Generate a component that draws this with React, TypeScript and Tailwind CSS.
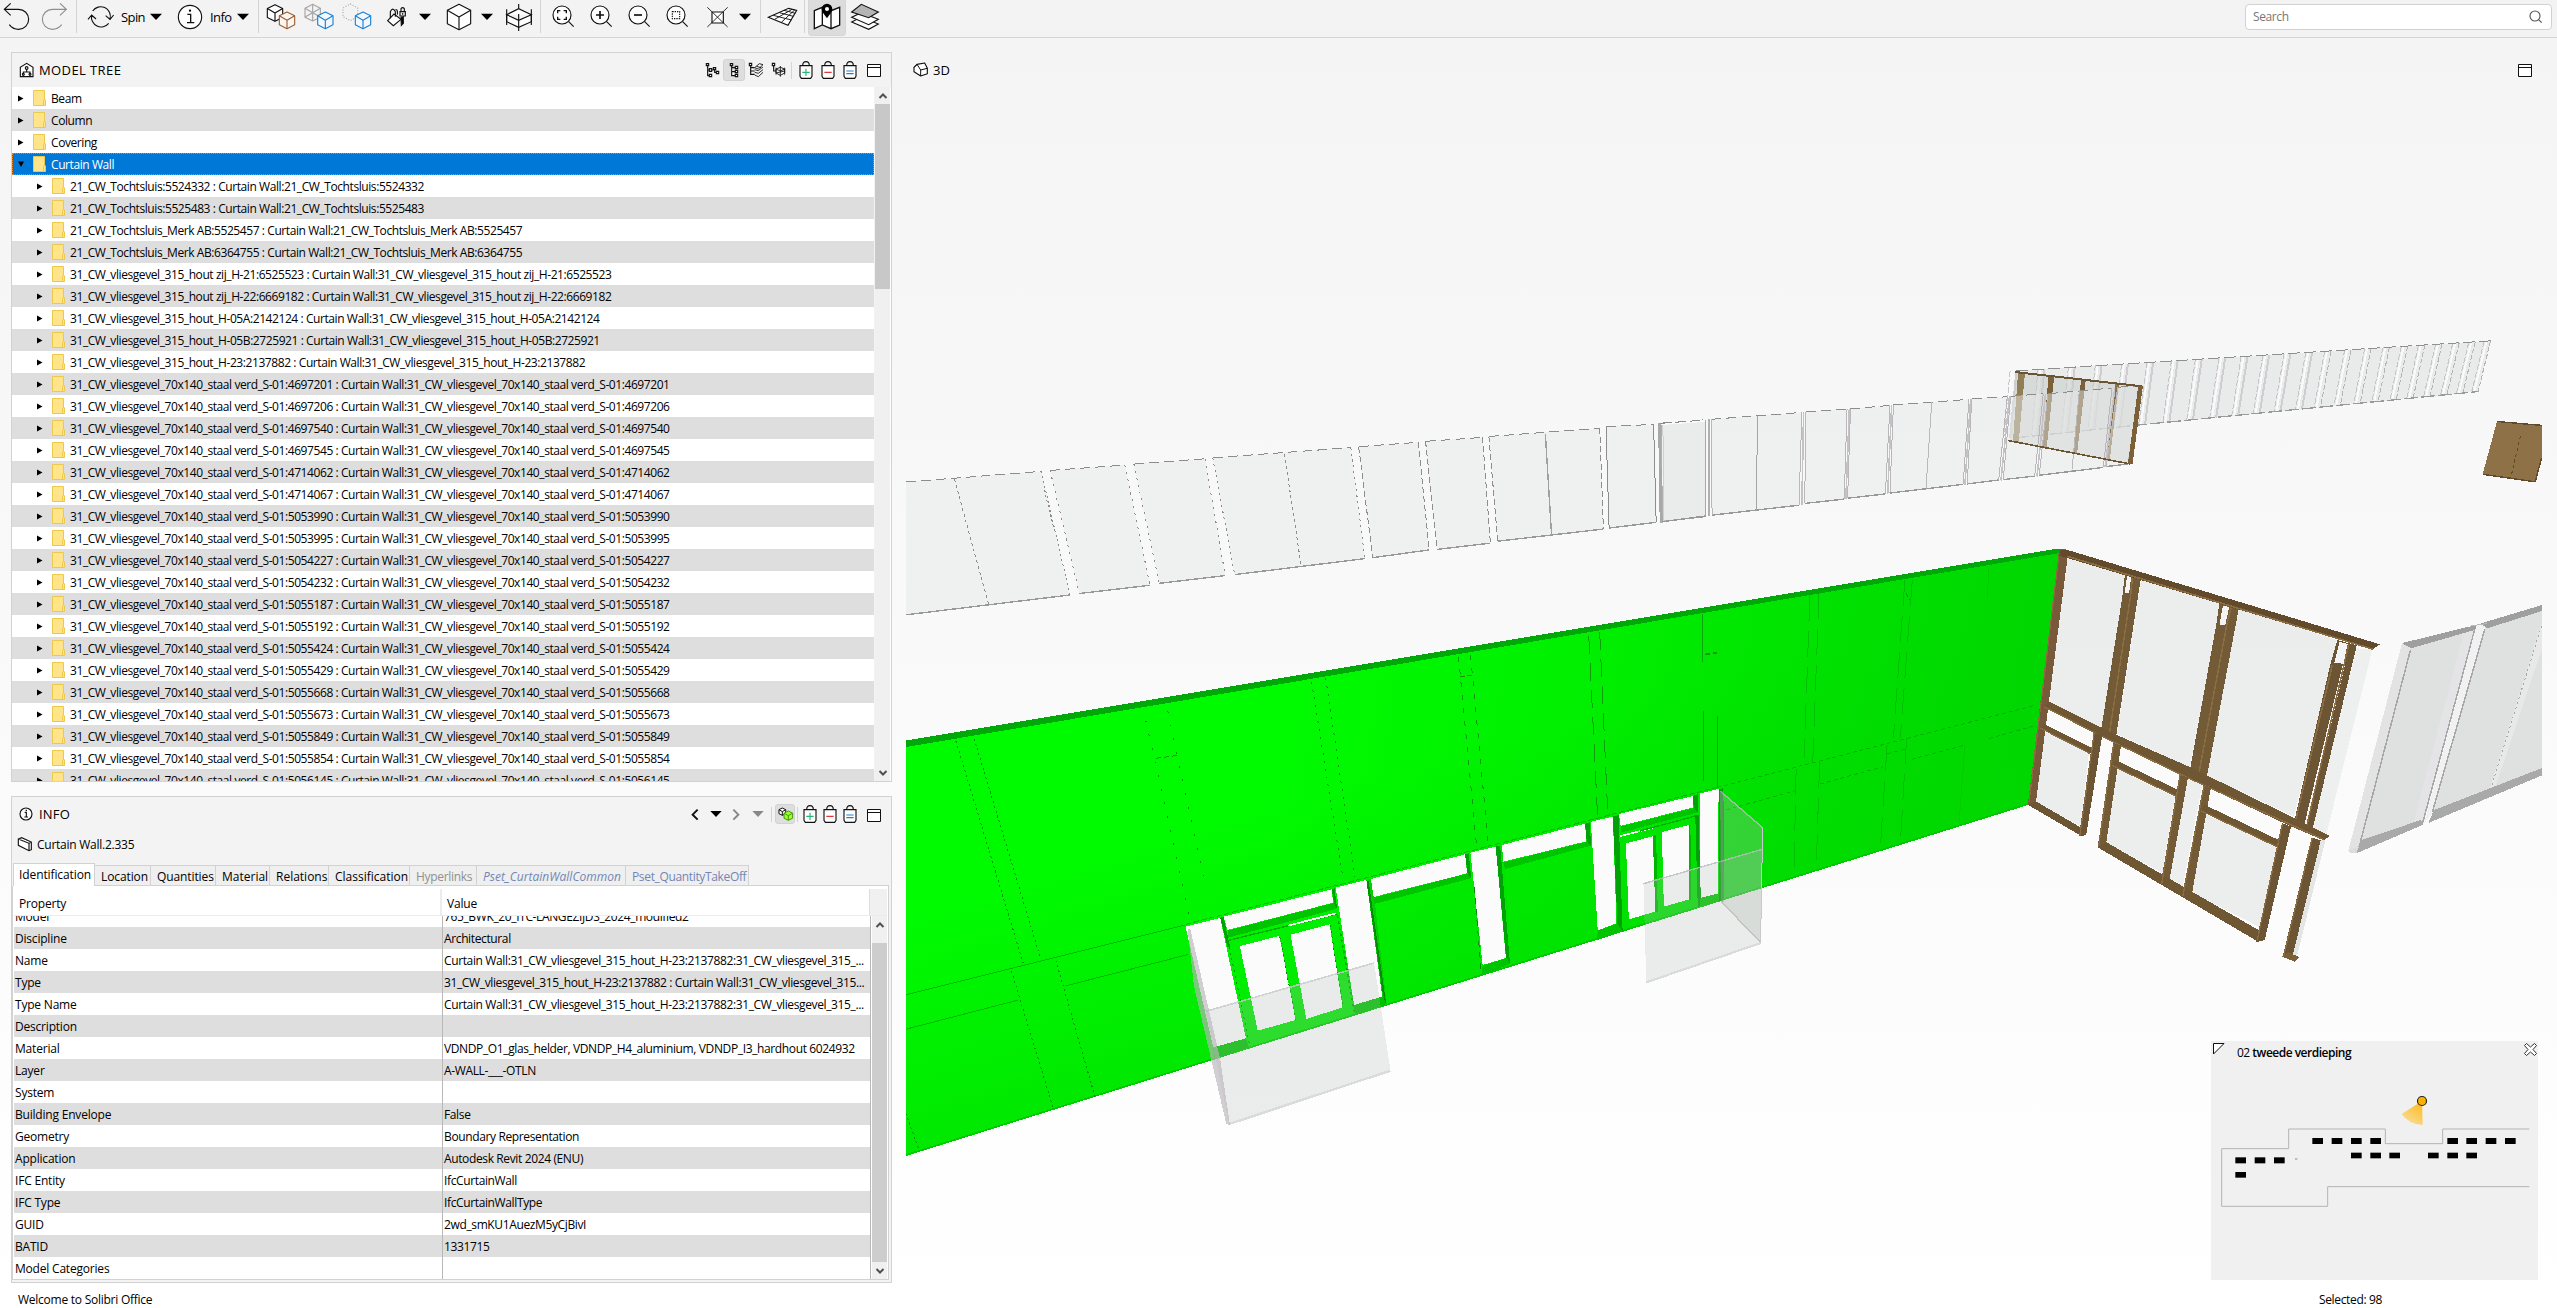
import React from "react";

/* ---------- shared pieces ---------- */

type Box = { x: number; y?: number; w: number; h?: number; children: React.ReactNode; className?: string };

// Icon cell: the artwork is authored on a grid three times finer than the screen.
function Ico({ x, y = 0, w, h = 111, children, className = "" }: Box) {
  return (
    <svg
      className={`shrink-0 ${className}`}
      width={w / 3}
      height={h / 3}
      viewBox={`${x} ${y} ${w} ${h}`}
      fill="none"
      stroke="#111"
      strokeWidth={3.4}
    >
      {children}
    </svg>
  );
}

const P = ({ p, f, o }: { p: string; f: string; o?: number }) => <polygon points={p} fill={f} opacity={o} />;

function Lines({ d, s, w = 1, dash, o }: { d: string; s: string; w?: number; dash?: string; o?: number }) {
  return (
    <path d={d} fill="none" stroke={s} strokeWidth={w} strokeDasharray={dash} opacity={o} vectorEffect="non-scaling-stroke" />
  );
}

// Isometric cube outline centred at cx, cy
function Cube({ cx, cy, r, s, fill = "none", sw = 3.4 }: { cx: number; cy: number; r: number; s: string; fill?: string; sw?: number }) {
  const a = r * 0.92;
  const b = r * 0.54;
  return (
    <g stroke={s} strokeWidth={sw} fill={fill} strokeLinejoin="round">
      <path d={`M${cx} ${cy - r}L${cx + a} ${cy - b}V${cy + b}L${cx} ${cy + r}L${cx - a} ${cy + b}V${cy - b}Z`} />
      <path fill="none" d={`M${cx - a} ${cy - b}L${cx} ${cy}L${cx + a} ${cy - b}M${cx} ${cy}V${cy + r}`} />
    </g>
  );
}

const Sep = () => <div className="h-[33px] w-px shrink-0 self-start bg-[#d4d4d4]" />;

/* ---------- toolbar ---------- */

const Lens = ({ cx }: { cx: number }) => (
  <>
    <circle cx={cx} cy={45} r={27} fill="#fff" />
    <path d={`M${cx + 20} 65L${cx + 35} 80`} />
  </>
);

function Toolbar() {
  return (
    <header className="flex h-[38px] shrink-0 items-start border-b border-[#d4d4d4] bg-[#f3f3f3]">
      <Ico x={0} w={108}>
        <path d="M32 10L13 28L32 46M13 28H56A30 30 0 0 1 56 88Q38 88 28 74" />
      </Ico>
      <Ico x={108} w={120}>
        <path stroke="#8e8e8e" d="M180 10L199 28L180 46M199 28H157A30 30 0 0 0 157 88Q174 88 185 74" />
      </Ico>
      <Sep />
      <Ico x={231} w={132}>
        <path d="M278 33A29 29 0 0 1 330 57M317 47L330 58L341 45M326 70A29 29 0 0 1 275 46M264 58L275 45L288 57" />
      </Ico>
      <span className="mt-[6px] w-[29px] text-[13px] leading-[23px] tracking-[-0.6px]">Spin</span>
      <Ico x={450} w={180}>
        <path d="M450 41H486L468 60Z" fill="#000" stroke="none" />
        <circle cx={570} cy={51} r={35} fill="#fff" />
        <path strokeWidth={4} d="M562 43H572V67M561 68H583" />
        <circle cx={570} cy={32} r={3.4} fill="#000" stroke="none" />
      </Ico>
      <span className="mt-[6px] w-[27px] text-[13px] leading-[23px] tracking-[-0.6px]">Info</span>
      <Ico x={711} w={63}>
        <path d="M711 41H747L729 60Z" fill="#000" stroke="none" />
      </Ico>
      <Sep />
      <Ico x={777} w={120}>
        <Cube cx={825} cy={39} r={25} s="#111" fill="#fff" />
        <Cube cx={861} cy={61} r={25} s="#9b5f33" fill="#fdf5ef" />
      </Ico>
      <Ico x={897} w={114}>
        <Cube cx={938} cy={38} r={25} s="#a5a5a5" />
        <path stroke="#a5a5a5" d="M938 12V38M915 51L938 38L961 51" />
        <Cube cx={976} cy={61} r={25} s="#1a80d8" fill="#f2f8fd" />
      </Ico>
      <Ico x={1011} w={117}>
        <path stroke="#a5a5a5" strokeDasharray="3 5" d="M1051 12L1073 24V50L1051 62L1029 50V24Z" />
        <Cube cx={1089} cy={61} r={25} s="#1a80d8" fill="#f2f8fd" />
      </Ico>
      <Ico x={1128} w={192}>
        <path fill="#fff" d="M1163 62L1182 42L1203 58L1180 77Z" />
        <path d="M1171 55V35Q1178 20 1186 35V50M1186 30Q1194 26 1192 44" />
        <path fill="#000" d="M1203 52L1210 50V70L1204 76Z" />
        <path fill="#eee" d="M1200 35H1216V48H1200ZM1203 35V26Q1208 20 1213 26V35" />
        <path d="M1208 39V44" />
        <path d="M1257 41H1293L1275 60Z" fill="#000" stroke="none" />
      </Ico>
      <Ico x={0} w={171}>
        <Cube cx={57} cy={51} r={38} s="#111" fill="#fff" />
        <path d="M123 41H159L141 60Z" fill="#000" stroke="none" />
      </Ico>
      <Ico x={171} w={129}>
        <path fill="#fff" d="M200 44L236 26L274 44L236 61ZM200 44V65L236 82L274 65V44" />
        <path d="M200 28V75M274 28V75M236 12V26M236 42V93" />
      </Ico>
      <Sep />
      <Ico x={303} w={132}>
        <Lens cx={366} />
        <path strokeWidth={4} d="M353 40V32H361M371 32H379V40M379 50V58H371M361 58H353V50" />
      </Ico>
      <Ico x={435} w={117}>
        <Lens cx={480} />
        <path strokeWidth={5} d="M468 45H492M480 33V57" />
      </Ico>
      <Ico x={552} w={114}>
        <Lens cx={594} />
        <path strokeWidth={5} d="M582 45H606" />
      </Ico>
      <Ico x={666} w={114}>
        <Lens cx={708} />
        <path strokeDasharray="4 3" d="M697 35H719V56H697Z" />
      </Ico>
      <Ico x={780} w={180}>
        <path fill="#fff" d="M816 36H850V69H816Z" />
        <path d="M802 22L863 81M863 22L802 81" strokeWidth={2.6} />
        <path d="M897 41H933L915 60Z" fill="#000" stroke="none" />
      </Ico>
      <Sep />
      <Ico x={963} w={129}>
        <path fill="#fff" d="M985 52L1046 25L1070 31L1044 76Z" />
        <path strokeWidth={2.8} d="M1000 46L1054 60M1018 38L1060 49M1032 31L1066 40M1004 58L1056 28M1024 67L1064 30" />
      </Ico>
      <Sep />
      <div className="ml-[3px] flex h-[36px] w-[38px] justify-center overflow-hidden rounded-b-[4px] border border-t-0 border-[#d6d6d6] bg-[#dcdcdc]">
        <Ico x={1107} w={108}>
          <path fill="#fff" strokeWidth={4} d="M1123 32L1147 22L1173 32L1199 22V75L1173 86L1147 75L1123 86ZM1147 22V75M1173 32V86" />
          <path fill="#000" stroke="none" d="M1161 55C1150 40 1145 34 1145 27A16 16 0 0 1 1177 27C1177 34 1172 40 1161 55Z" />
          <circle cx={1161} cy={27} r={6} fill="#fff" stroke="none" />
        </Ico>
      </div>
      <Ico x={1218} w={117}>
        <path fill="#fff" d="M1235 66L1264 51L1315 72L1286 88Z" />
        <path fill="#fff" d="M1235 52L1264 38L1315 58L1286 74Z" />
        <path fill="#b4b4b4" d="M1235 36L1264 13L1315 36L1286 53Z" />
      </Ico>
      <div className="ml-auto mt-[4px] mr-[5px] flex h-[26px] w-[307px] items-center justify-between rounded-[4px] border border-[#d2d2d2] bg-white pl-[7px] pr-[8px]">
        <span className="text-[12px] tracking-[-0.4px] text-[#777]">Search</span>
        <Ico x={988} y={30} w={42} h={42}>
          <circle cx={1006} cy={48} r={15} stroke="#555" />
          <path stroke="#555" d="M1016 58L1026 68" />
        </Ico>
      </div>
    </header>
  );
}

/* ---------- panel icons ---------- */

const Bag = ({ x, kind }: { x: number; kind: "add" | "remove" | "equal" }) => (
  <Ico x={0} y={0} w={x} h={69} className="mt-px">
    <g transform={`translate(${(x - 42) / 2} 0)`}>
      <path fill="#fff" d="M3 20H39V52L35 58H7L3 52Z" />
      <path d="M11 20Q11 8 21 8Q31 8 31 20" />
      {kind === "add" && <path stroke="#22b573" d="M21 29V51M10 40H32" />}
      {kind === "remove" && <path stroke="#e02020" d="M10 40H32" />}
      {kind === "equal" && <path stroke="#1a80d8" d="M10 36H32M10 44H32" />}
    </g>
  </Ico>
);

const WindowIcon = () => (
  <svg width="14" height="13" viewBox="0 0 14 13" fill="#fff" stroke="#111" className="shrink-0">
    <path d="M0.5 0.5H13.5V12.5H0.5ZM0.5 3.5H13.5" />
  </svg>
);

const Chevron = ({ up }: { up?: boolean }) => (
  <svg width="10" height="8" viewBox="0 0 10 8" fill="none" stroke="#505050" strokeWidth="2">
    <path d={up ? "M1.5 6L5 2.5L8.5 6" : "M1.5 2L5 5.5L8.5 2"} />
  </svg>
);

/* ---------- model tree ---------- */

const doubled = (n: string) => `${n} : Curtain Wall:${n}`;
const STEEL = [
  "4697201", "4697206", "4697540", "4697545", "4714062", "4714067", "5053990", "5053995", "5054227", "5054232",
  "5055187", "5055192", "5055424", "5055429", "5055668", "5055673", "5055849", "5055854", "5056145",
];
const ROOTS = ["Beam", "Column", "Covering", "Curtain Wall"];
const CHILDREN = [
  "21_CW_Tochtsluis:5524332",
  "21_CW_Tochtsluis:5525483",
  "21_CW_Tochtsluis_Merk AB:5525457",
  "21_CW_Tochtsluis_Merk AB:6364755",
  "31_CW_vliesgevel_315_hout zij_H-21:6525523",
  "31_CW_vliesgevel_315_hout zij_H-22:6669182",
  "31_CW_vliesgevel_315_hout_H-05A:2142124",
  "31_CW_vliesgevel_315_hout_H-05B:2725921",
  "31_CW_vliesgevel_315_hout_H-23:2137882",
  ...STEEL.map((s) => `31_CW_vliesgevel_70x140_staal verd_S-01:${s}`),
].map(doubled);

const Folder = () => (
  <svg width="13" height="16" viewBox="0 0 13 16" className="ml-[9px] shrink-0">
    <path d="M0.5 0.5H11.5V9L12.5 10V15.5H0.5Z" fill="#ffe48a" stroke="#ecc94b" />
    <path d="M10.5 15.5V10.5L11.5 9" fill="none" stroke="#ecc94b" />
  </svg>
);

function TreeRow({ text, child }: { text: string; child?: boolean }) {
  const selected = text === "Curtain Wall";
  return (
    <div
      className={
        "flex h-[22px] shrink-0 items-center " +
        (child ? "pl-[25px] " : "pl-[6px] ") +
        (selected
          ? "bg-[#0078d7] text-white outline-1 -outline-offset-1 outline-dotted outline-[#e8842c]"
          : "odd:bg-white even:bg-[#dedede]")
      }
    >
      <svg width="6" height="7" viewBox="0 0 6 7" className="shrink-0">
        <path d={selected ? "M0 0.5H6L3 6Z" : "M0 0.5V6.5L5.5 3.5Z"} />
      </svg>
      <Folder />
      <span className="ml-[5px] pt-px text-[12px] leading-[22px] tracking-[-0.42px] whitespace-pre">{text}</span>
    </div>
  );
}

function ModelTree() {
  return (
    <section className="flex h-[730px] shrink-0 flex-col border border-[#d2d2d2] bg-[#f3f3f3]">
      <div className="flex h-[34px] shrink-0 items-center pr-[10px] pl-[7px]">
        <Ico x={58} y={186} w={45} h={48}>
          <path d="M62 230V202L81 190L100 202V230Z" fill="#fff" />
          <circle cx={81} cy={204} r={4} />
          <path d="M81 208V216M71 223V216H91V223" />
          <circle cx={71} cy={223} r={3} />
          <circle cx={91} cy={223} r={3} />
        </Ico>
        <h2 className="ml-[5px] pt-px text-[13px] tracking-[0.4px]">MODEL TREE</h2>
        <div className="ml-auto flex items-center">
          <Ico x={792} y={186} w={57} h={48}>
            <path d="M799 191H806V197H799ZM803 197V227H808M803 210H808M808 206H815V214H808ZM808 223H815V230H808ZM815 210H821M820 203H827V209H820ZM824 209V217H829M829 214H836V221H829Z" />
          </Ico>
          <div className="flex h-[22px] w-[22px] items-center justify-center rounded-[3px] border border-[#d2d2d2] bg-[#dedede]">
            <Ico x={858} y={186} w={48} h={48}>
              <path fill="#fff" d="M871 191H878V197H871ZM875 197V227H885M875 203H885M875 215H885M886 199H893V206H886ZM886 211H893V218H886ZM886 223H893V230H886Z" />
            </Ico>
          </div>
          <Ico x={915} y={186} w={63} h={48}>
            <path d="M928 190H935V197H928ZM932 197V223H944M932 203H944M932 213H944" />
            <path strokeWidth={2.6} d="M944 203L958 191L969 194L955 207ZM944 209L955 212L969 201M944 217L955 220L969 209M944 225L955 230L969 217M950 199L963 203" />
          </Ico>
          <Ico x={978} y={186} w={75} h={48}>
            <path d="M997 190H1004V197H997ZM1001 197V213H1008" />
            <path strokeWidth={2.6} d="M1008 207L1021 202L1034 207V219L1021 226L1008 219ZM1008 207L1021 213L1034 207M1021 198V230M1008 203V224M1034 203V224M1008 219L1034 213" />
          </Ico>
          <div className="h-[17px] w-px bg-[#d4d4d4]" />
          <div className="w-[3px]" />
          <Bag x={66} kind="add" />
          <Bag x={66} kind="remove" />
          <Bag x={66} kind="equal" />
          <div className="ml-[6px]">
            <WindowIcon />
          </div>
        </div>
      </div>
      <div className="flex min-h-0 flex-1">
        <div className="flex min-h-0 flex-1 flex-col overflow-hidden">
          {ROOTS.map((t) => (
            <TreeRow key={t} text={t} />
          ))}
          {CHILDREN.map((t) => (
            <TreeRow key={t} text={t} child />
          ))}
        </div>
        <div className="ml-px flex w-[15px] flex-col items-center bg-[#f0f0f0]">
          <div className="flex h-[17px] w-full items-center justify-center">
            <Chevron up />
          </div>
          <div className="h-[185px] w-full bg-[#c8c8c8]" />
          <div className="mt-auto flex h-[17px] items-center">
            <Chevron />
          </div>
        </div>
        <div className="w-px bg-white" />
      </div>
    </section>
  );
}

/* ---------- info panel ---------- */

const TABS: [string, string][] = [
  ["Location", "w-[56px] tracking-[-0.1px]"],
  ["Quantities", "w-[65px] tracking-[-0.1px]"],
  ["Material", "w-[54px]"],
  ["Relations", "w-[59px]"],
  ["Classification", "w-[81px]"],
  ["Hyperlinks", "w-[67px] tracking-[-0.3px] text-[#909090]"],
  ["Pset_CurtainWallCommon", "w-[149px] italic tracking-[0.02px] text-[#7286b4]"],
  ["Pset_QuantityTakeOff", "w-[123px] tracking-[-0.35px] text-[#7286b4]"],
];

const PROPS: [string, string][] = [
  ["Model", "765_BWK_20_ITC-LANGEZIJDS_2024_modified2"],
  ["Discipline", "Architectural"],
  ["Name", "Curtain Wall:31_CW_vliesgevel_315_hout_H-23:2137882:31_CW_vliesgevel_315_..."],
  ["Type", "31_CW_vliesgevel_315_hout_H-23:2137882 : Curtain Wall:31_CW_vliesgevel_315..."],
  ["Type Name", "Curtain Wall:31_CW_vliesgevel_315_hout_H-23:2137882:31_CW_vliesgevel_315_..."],
  ["Description", ""],
  ["Material", "VDNDP_O1_glas_helder, VDNDP_H4_aluminium, VDNDP_I3_hardhout 6024932"],
  ["Layer", "A-WALL-___-OTLN"],
  ["System", ""],
  ["Building Envelope", "False"],
  ["Geometry", "Boundary Representation"],
  ["Application", "Autodesk Revit 2024 (ENU)"],
  ["IFC Entity", "IfcCurtainWall"],
  ["IFC Type", "IfcCurtainWallType"],
  ["GUID", "2wd_smKU1AuezM5yCjBivI"],
  ["BATID", "1331715"],
  ["Model Categories", ""],
];

function InfoPanel() {
  return (
    <section className="mt-[14px] flex h-[487px] shrink-0 flex-col border border-[#d2d2d2] bg-[#f3f3f3]">
      <div className="flex h-[34px] shrink-0 items-center pr-[10px] pl-[7px]">
        <Ico x={60} y={201} w={42} h={42}>
          <circle cx={81} cy={222} r={18} fill="#fff" />
          <path d="M77 217H82V231M76 231H87" />
          <path d="M82 209V213" strokeWidth={4} />
        </Ico>
        <h2 className="ml-[6px] pt-px text-[13px] tracking-[0.2px]">INFO</h2>
        <div className="ml-auto flex items-center">
          <Ico x={747} y={198} w={246} h={45}>
            <path strokeWidth={6} d="M773 206L758 221L773 236" />
            <path fill="#000" stroke="none" d="M811 210H845L828 228Z" />
            <path strokeWidth={6} stroke="#888" d="M880 206L895 221L880 236" />
            <path fill="#888" stroke="none" d="M937 210H971L954 228Z" />
          </Ico>
          <div className="h-[15px] w-px bg-[#d4d4d4]" />
          <div className="mr-[2px] ml-[3px] flex h-[20px] w-[20px] items-center justify-center rounded-[3px] border border-[#d2d2d2] bg-[#dedede]">
            <Ico x={1011} y={196} w={51} h={48}>
              <Cube cx={1027} cy={213} r={11} s="#111" fill="#fff" sw={3} />
              <Cube cx={1045} cy={225} r={14} s="#3f9a0a" fill="#9fff2a" sw={3} />
            </Ico>
          </div>
          <div className="h-[15px] w-px bg-[#d4d4d4]" />
          <div className="w-[2px]" />
          <Bag x={60} kind="add" />
          <Bag x={60} kind="remove" />
          <Bag x={60} kind="equal" />
          <div className="mt-[2px] ml-[7px]">
            <WindowIcon />
          </div>
        </div>
      </div>
      <div className="flex h-[32px] shrink-0 items-start pt-[5px] pl-[5px]">
        <Ico x={52} y={288} w={48} h={48}>
          <path fill="#fff" d="M56 297L66 293L95 306V329L88 332L56 316ZM56 297L88 310V332M88 310L95 306" />
        </Ico>
        <span className="ml-[4px] text-[12px] leading-[18px] tracking-[-0.25px]">Curtain Wall.2.335</span>
      </div>
      <div className="flex h-[23px] shrink-0 items-end border-b-0 pl-px text-[12px]">
        <div className="h-[23px] w-[82px] border border-b-0 border-[#d2d2d2] bg-white pl-[5px] leading-[22px] tracking-[-0.1px]">
          Identification
        </div>
        {TABS.map(([t, c]) => (
          <div key={t} className={`h-[21px] border-t border-r border-b border-[#d2d2d2] bg-[#efefef] pl-[6px] leading-[22px] whitespace-nowrap ${c}`}>
            {t}
          </div>
        ))}
        <div className="mr-[2px] flex-1 border-b border-[#d2d2d2]" />
      </div>
      <div className="mr-[2px] mb-[2px] flex min-h-0 flex-1 flex-col border border-t-0 border-[#d2d2d2] bg-white pt-[3px] pr-[1px] pl-px">
        <div className="flex h-[27px] shrink-0 border-b border-[#ececec] text-[12px] leading-[30px] tracking-[-0.2px]">
          <div className="w-[428px] border-r-2 border-[#ececec] pl-[5px]">Property</div>
          <div className="flex-1 border-r border-[#dedede] pl-[5px]">Value</div>
          <div className="w-[17px] bg-[#f0f0f0]" />
        </div>
        <div className="flex min-h-0 flex-1">
          <div className="flex min-w-0 flex-1 flex-col overflow-hidden border-r border-[#b8b8b8]">
            <div className="-mt-[11px]">
              {PROPS.map(([k, v]) => (
                <div key={k} className="flex h-[22px] text-[12px] leading-[24px] odd:bg-white even:bg-[#dedede]">
                  <div className="w-[429px] shrink-0 border-r border-[#b8b8b8] pl-px tracking-[-0.2px]">{k}</div>
                  <div className="pl-[1px] tracking-[-0.37px] whitespace-pre">{v}</div>
                </div>
              ))}
            </div>
          </div>
          <div className="ml-px flex w-[15px] flex-col items-center bg-[#f0f0f0]">
            <div className="flex h-[18px] items-center">
              <Chevron up />
            </div>
            <div className="mt-[9px] w-full flex-1 bg-[#cdcdcd]" />
            <div className="flex h-[17px] items-center">
              <Chevron />
            </div>
          </div>
        </div>
      </div>
    </section>
  );
}

/* ---------- 3D scene ---------- */

const GLASS = "#e5e8e7";

const FRONT_PANELS = [
  "11,128 270,106 325,361 11,402",
  "287,104 430,93 478,341 343,358",
  "447,91 583,80 622,321 496,337",
  "598,78 862,57 889,286 640,319",
  "877,55 991,46 1012,268 904,284",
  "1005,44 1114,36 1129,254 1027,267",
  "1126,34 1338,17 1345,225 1143,250",
  "1350,14 1441,9 1446,211 1356,223",
];
const MID_PANELS = [
  "5,237 80,230 80,453 7,464",
  "90,229 248,213 243,427 91,450",
  "255,212 327,205 322,413 253,423",
  "333,205 402,197 394,401 328,411",
  "408,196 540,183 530,379 402,399",
  "545,182 607,177 592,369 537,378",
  "613,176 670,170 655,360 600,368",
  "678,170 790,157 775,340 663,358",
  "800,155 840,152 818,332 780,338",
];
const BACK_X = [623, 672, 725, 772, 818, 862, 905, 947, 988, 1027, 1065, 1102, 1140, 1173, 1208, 1243, 1275, 1307, 1337, 1367, 1397, 1425, 1452];

function PanelStrip({ panels, side, dash }: { panels: string[]; side: string; dash: (i: number) => string | undefined }) {
  return (
    <>
      {panels.map((p, i) => {
        const [a, b, c, d] = p.split(" ");
        return (
          <g key={p}>
            <P p={p} f={GLASS} o={0.5} />
            <Lines d={`M${a}L${b}`} s="#8c8c8c" dash="10 5" />
            <Lines d={`M${d}L${c}`} s="#999" w={1.4} />
            <Lines d={`M${a}L${d}M${b}L${c}`} s={side} dash={dash(i)} />
          </g>
        );
      })}
    </>
  );
}

function BackStrip() {
  const top = (x: number) => 117 - ((x - 623) * 69) / 829;
  const bot = (x: number) => 272 - ((x - 612) * 107) / 818;
  return (
    <>
      <P p="623,117 1452,48 1430,165 612,272" f="#dfe2e1" o={0.55} />
      {BACK_X.map((x) => {
        const bx = x - 11 - ((x - 623) * 11) / 829;
        return (
          <g key={x}>
            <Lines d={`M${x} ${top(x)}L${bx} ${bot(bx)}`} s={x > 1150 ? "#b4b4b8" : "#cfcdd2"} w={x > 1150 ? 1 : 2} dash={x > 1150 ? "5 2" : undefined} />
            <Lines d={`M${x - 7} ${top(x)}L${bx - 7} ${bot(bx)}`} s="#fafafa" w={2} />
            <Lines d={`M${x - 11} ${top(x)}L${bx - 11} ${bot(bx)}`} s="#c6c5ca" dash="6 2" />
          </g>
        );
      })}
      <Lines d="M623 117L1452 48" s="#8f8f8f" dash="12 4" />
      <Lines d="M620 272L830 243L1430 165" s="#9a9a9a" w={1.3} dash="14 3" />
    </>
  );
}

const W = "#fbfbfb";
const DK = "#00c400";
const DK2 = "#00a208";

function Scene() {
  return (
    <svg width="1636" height="1236" viewBox="906 38 1636 1236" className="block shrink-0" shapeRendering="crispEdges">
      <defs>
        <linearGradient id="wall" gradientUnits="userSpaceOnUse" x1="1300" y1="700" x2="2060" y2="820">
          <stop offset="0" stopColor="#00fa00" />
          <stop offset="0.35" stopColor="#00f000" />
          <stop offset="0.7" stopColor="#00e000" />
          <stop offset="1" stopColor="#00d400" />
        </linearGradient>
        <linearGradient id="wallFloor" gradientUnits="userSpaceOnUse" x1="1300" y1="800" x2="1370" y2="1020">
          <stop offset="0" stopColor="#00d800" stopOpacity="0" />
          <stop offset="1" stopColor="#00d800" stopOpacity="0.55" />
        </linearGradient>
      </defs>

      {/* rear and middle glazing strips */}
      <g transform="translate(1660 320) scale(0.57207 0.43367)">
        <BackStrip />
        <P p="623,120 843,153 822,332 612,278" f="#c9cfcc" o={0.6} />
        <P p="626,120 638,122 627,282 617,280" f="#8b7348" o={0.9} />
        <P p="679,130 689,131 676,295 669,293" f="#7c6037" />
        <P p="736,138 744,140 729,309 722,307" f="#7c6037" />
        <P p="796,148 802,149 786,325 780,323" f="#8b7348" />
        <PanelStrip panels={MID_PANELS} side="#b9b7ba" dash={() => undefined} />
        <Lines d="M170 221L169 438" s="#a5a5a5" />
        <Lines d="M475 190L465 388M733 162L720 348" s="#b9b9b9" />
        <Lines d="M2 237L3 468M86 229L86 452" s="#b0b0b0" w={2} />
        <Lines d="M251 212L248 427M331 205L325 412M405 196L398 402M543 182L533 380M611 176L596 370M674 170L659 361M795 156L778 340" s="#c4c2c5" w={1.6} />
        <Lines d="M621 120L843 153" s="#6b5433" w={2} />
        <Lines d="M609 278L822 332" s="#6b5433" w={1.6} />
        <P p="836,152 844,153 826,333 818,331" f="#7c6037" />
        <P p="1463,234 1541,243 1541,318 1530,373 1438,356" f="#8e7146" />
        <Lines d="M1463 234L1541 243M1541 318L1530 373L1438 356" s="#5f4a2b" w={1.4} />
        <Lines d="M1504 268L1487 365" s="#5f4a2b" dash="3 3" />
      </g>
      <g transform="translate(900 420) scale(0.52296 0.48469)">
        <PanelStrip panels={FRONT_PANELS} side="#8d8d8d" dash={(i) => (i < 1 ? "2 3" : i < 3 ? "2 5" : i < 4 ? "2 4" : i < 7 ? "6 3" : undefined)} />
        <P p="1453,7 1541,0 1541,4 1453,11" f="#fafafa" />
        <Lines d="M1453 7L1457 210M1451 7L1454 212" s="#a8a8a8" w={1.4} />
        <Lines d="M1453 7L1541 0" s="#8c8c8c" dash="10 5" />
        <Lines d="M104 122L170 383M735 70L767 300" s="#8d8d8d" dash="3 3" />
        <Lines d="M1234 28L1246 238" s="#a0a0a0" w={1.4} />
        <Lines d="M276 145L297 235" s="#8d8d8d" dash="2 3" />
        <P p="1457,10 1541,4 1541,198 1459,210" f={GLASS} o={0.5} />
        <Lines d="M1457 210L1541 198" s="#999" w={1.4} />
        <Lines d="M1541 0V198" s="#a8a8a8" />
      </g>

      {/* selected wall */}
      <P p="906,741 2060,549 2028,805 906,1156" f="url(#wall)" />
      <P p="906,741 2060,549 2028,805 906,1156" f="url(#wallFloor)" />
      <P p="906,740.5 2058,548.5 2066,549 2066,552 2060,553 906,747" f="#00a80a" />
      <Lines d="M906 1155L2028 804" s="#00c800" w={1.6} />

      <g transform="translate(900 420) scale(0.52296 0.48469)">
        <Lines d="M107 663L236 1122M142 658L269 1112M213 1137L293 1420M298 1115L373 1397M11 1430L37 1508" s="#079007" dash="2 3" />
        <Lines d="M470 620L553 1022M512 600L580 940" s="#079007" dash="2 12" />
        <Lines d="M787 540L847 945M814 532L870 942" s="#079007" dash="2 6" />
        <Lines d="M1068 488L1103 885M1091 485L1125 875" s="#0a980a" dash="5 8" />
        <Lines d="M1317 445L1334 820M1338 438L1353 803" s="#0aa00a" dash="18 9" />
        <Lines d="M1535 400V500M1536 600V745M1563 610V758" s="#0aa60a" />
        <Lines d="M11 1186L545 1042M11 1257L225 1197M315 1168L550 1103" s="#00b800" />
        <Lines d="M490 698L530 692M1070 530L1095 527M1540 483L1562 479" s="#0a980a" dash="5 3" />
      </g>
      <g transform="translate(1660 320) scale(0.57207 0.43367)">
        <Lines d="M262 635L252 1010M278 630L267 1020M428 600L408 965M441 600L420 965M238 1035L234 1285M279 1020L273 1270M397 980L385 1220M431 965L420 1210" s="#00c000" dash="26 10" />
        <Lines d="M575 570L572 640M533 980L523 1155" s="#00cc00" />
        <Lines d="M100 1078L657 888M115 1130L237 1085M280 1070L390 1030M397 1000L428 990M440 1013L533 980M575 965L657 935" s="#00b400" dash="4 3" />
        <Lines d="M80 772L100 768M430 630L437 645" s="#0a980a" dash="4 3" />
      </g>

      {/* openings in the lower part of the wall */}
      <g transform="translate(1150 760) scale(0.40816 0.33333)">
        <Lines d="M87 493L1395 80" s="#00b800" dash="6 2" />
        <P p="87,500 172,474 235,835 155,862" f={W} />
        <P p="172,474 180,470 196,560 190,560" f={DK2} />
        <P p="180,470 445,388 449,428 190,510" f={W} />
        <P p="190,512 453,428 456,447 192,533" f={DK} />
        <P p="445,388 452,385 459,450 451,430" f={DK2} />
        <Lines d="M192 541L457 462" s="#00b000" w={1.4} />
        <P p="338,494 455,458 456,463 340,499" f={W} />
        <P p="220,558 317,528 357,780 264,812" f={W} />
        <P p="344,524 440,493 472,742 383,777" f={W} />
        <Lines d="M318 530L357 780M441 494L474 745M194 560L245 860" s="#079007" dash="2 4" />
        <Lines d="M459 465L502 765" s="#00a800" w={1.5} dash="3 3" />
        <P p="455,383 530,360 573,708 500,735" f={W} />
        <P p="530,360 541,356 552,440 580,733 572,735" f="#00d000" />
        <Lines d="M533 362L576 730" s="#078a07" w={2} />
        <P p="500,735 573,708 577,735 502,765" f="#00c000" />
        <P p="155,862 235,835 243,862 157,900" f="#00c000" />
        <P p="541,357 772,283 777,340 548,411" f={W} />
        <P p="548,413 783,339 786,355 550,432" f={DK} />
        <P p="772,283 781,280 787,355 778,340" f={DK2} />
        <P p="785,278 847,260 872,594 815,615" f={W} />
        <P p="847,260 858,257 882,610 874,612" f={DK2} />
        <P p="858,257 862,256 870,327 885,605 882,610" f="#00e400" />
        <P p="815,617 875,594 882,612 812,646" f="#00c400" />
        <Lines d="M794 380L812 640" s="#078a07" dash="6 5" />
        <P p="862,255 1066,191 1069,244 866,305" f={W} />
        <P p="866,307 1078,243 1080,257 870,327" f={DK} />
        <P p="1066,191 1077,187 1081,257 1070,245" f={DK2} />
        <P p="1080,185 1134,170 1143,490 1097,511" f={W} />
        <P p="1134,170 1148,165 1158,515 1146,512" f={DK2} />
        <P p="1097,512 1145,491 1158,515 1095,541" f="#00c400" />
        <P p="1149,162 1330,108 1331,142 1153,198" f={W} />
        <P p="1153,200 1342,142 1342,157 1153,218" f={DK} />
        <P p="1330,108 1342,103 1342,157 1332,142" f={DK2} />
        <P p="1152,226 1235,200 1235,205 1153,231" f={W} />
        <Lines d="M1200 213L1342 166" s="#00b000" w={1.4} />
        <P p="1166,250 1232,229 1238,455 1173,478" f={W} />
        <P p="1254,216 1320,195 1322,418 1259,440" f={W} />
        <P p="1232,229 1240,224 1244,455 1238,455" f="#00b400" />
        <P p="1320,195 1324,194 1326,418 1321,420" f="#00b400" />
        <P p="1336,168 1344,166 1350,440 1342,440" f={DK2} />
        <P p="1347,101 1393,87 1392,402 1349,414" f={W} />
        <P p="1349,414 1393,400 1400,422 1346,441" f="#00c400" />
        <P p="1393,87 1405,85 1406,420 1393,425" f={DK2} />
        {/* glass canopies */}
        <P p="137,752 549,608 589,930 194,1093" f="#b4bdb9" o={0.25} />
        <Lines d="M137 754L549 609" s="#c8cccb" w={1.6} o={0.8} />
        <Lines d="M194 1092L589 932" s="#d9dcdb" w={2.4} />
        <P p="92,505 99,508 172,898 196,1095 187,1092 108,680" f="#b9b6ba" o={0.65} />
        <P p="1397,92 1501,202 1496,548 1400,425" f="#aab5af" o={0.3} />
        <P p="1209,370 1500,267 1496,548 1216,668" f="#b4bdb9" o={0.24} />
        <Lines d="M1209 371L1500 268M1397 93L1501 203M1400 425L1496 548" s="#b9bdbb" w={1.4} o={0.8} />
        <Lines d="M1501 202L1496 548" s="#c6cac8" />
        <Lines d="M1216 667L1496 549" s="#d9dcdb" w={2.2} />
        <Lines d="M1400 92L1402 425" s="#7a967e" w={3} o={0.4} />
      </g>

      {/* brown timber frame */}
      <g transform="translate(1660 320) scale(0.57207 0.43367)">
        <P p="713,545 813,585 820,640 775,945 680,885" f={GLASS} o={0.7} />
        <P p="841,597 978,652 974,705 926,1032 799,955" f={GLASS} o={0.65} />
        <P p="1012,665 1183,738 1173,800 1108,1145 955,1050" f={GLASS} o={0.7} />
        <P p="1218,757 1245,760 1165,1185 1140,1170" f="#eceeed" o={0.9} />
        <P p="673,945 750,995 735,1168 657,1110" f={GLASS} o={0.7} />
        <P p="800,1035 900,1100 878,1275 780,1205" f={GLASS} o={0.7} />
        <P p="921,1055 948,1070 913,1310 890,1290" f={GLASS} o={0.6} />
        <P p="955,1140 1080,1215 1048,1400 930,1320" f={GLASS} o={0.7} />
        <P p="1155,1200 1163,1200 1114,1465 1105,1465" f="#e4e6e5" />

        <P p="697,535 713,542 657,1114 643,1118" f="#785a3a" />
        <P p="813,583 841,592 797,962 770,954 808,640" f="#745b37" />
        <P p="817,588 824,590 820,630 812,630" f="#f4f4f4" />
        <Lines d="M826 592L823 632L785 958" s="#8c6d41" w={1.5} />
        <P p="978,652 1012,664 955,1060 925,1048 972,705" f="#745b37" />
        <P p="984,658 995,662 988,704 978,703" f="#f4f4f4" />
        <Lines d="M998 664L990 708L941 1052" s="#8c6d41" w={1.5} />
        <P p="1184,738 1218,750 1140,1178 1107,1165 1172,793" f="#6c5534" />
        <P p="1188,742 1202,747 1195,793 1179,790" f="#f4f4f4" />
        <P p="1193,798 1197,798 1132,1165 1127,1160" f="#f4f4f4" />
        <Lines d="M1204 748L1130 1170M1175 797L1110 1160" s="#8c6d41" w={1.5} />
        <P p="700,530 712,530 1259,748 1245,760 700,544" f="#614b2c" />
        <Lines d="M712 545L1246 759" s="#8c6d41" w={1.6} />
        <P p="672,892 680,880 783,948 925,1030 1108,1148 1171,1190 1160,1200 1100,1166 925,1058 780,966" f="#6f5734" />
        <Lines d="M672 892L780 965L925 1057L1160 1198" s="#8c6d41" w={1.4} />

        <P p="665,940 672,932 756,988 752,1000" f="#6f5734" />
        <P p="758,950 773,958 745,1188 733,1190 735,1165" f="#6c5534" />
        <P p="643,1118 657,1110 742,1175 738,1191" f="#6c5534" />
        <P p="792,975 806,981 780,1205 765,1216" f="#745b37" />
        <P p="790,1026 797,1015 905,1083 902,1100" f="#6f5734" />
        <P p="908,1048 923,1055 890,1296 875,1302" f="#745b37" />
        <P p="950,1072 963,1078 930,1322 912,1332" f="#745b37" />
        <P p="945,1130 952,1118 1083,1200 1079,1216" f="#6f5734" />
        <P p="1087,1160 1103,1168 1057,1430 1042,1435" f="#6c5534" />
        <P p="765,1216 780,1204 1048,1408 1046,1434" f="#6f5734" />
        <P p="1139,1193 1155,1200 1106,1465 1088,1470" f="#6c5534" />
        <P p="1087,1468 1098,1458 1118,1469 1110,1480" f="#7c6037" />
        <Lines d="M697 545L645 1112M759 952L734 1188M793 977L767 1212M909 1050L877 1300M951 1074L914 1328M1088 1162L1044 1430M1140 1195L1090 1468M665 941L752 1000M790 1027L902 1098M945 1131L1079 1215" s="#8c6d41" w={1.3} />

        {/* light metal frame */}
        <P p="1310,755 1425,712 1335,1160 1222,1205" f="#dfe1e0" />
        <P p="1405,722 1422,714 1333,1158 1318,1155" f="#e4e4e6" />
        <P p="1297,745 1313,752 1222,1225 1203,1225" f="#e3e3e4" />
        <P p="1297,745 1430,702 1434,711 1313,757" f="#9f9f9f" />
        <P p="1217,1230 1224,1200 1330,1153 1334,1164" f="#a9a9a9" />
        <P p="1203,1222 1222,1215 1217,1230 1207,1230" f="#dcdcdc" />
        <Lines d="M1312 760L1225 1200M1424 715L1333 1160" s="#a8a8a8" w={1.5} />
        <P p="1428,700 1443,702 1352,1135 1336,1160" f="#f1f1f1" />
        <P p="1443,708 1542,668 1542,1036 1352,1132" f="#dfe1e0" />
        <P p="1541,700 1541,760 1458,1085 1448,1090" f="#e8e8e9" />
        <Lines d="M1541 705L1450 1090" s="#a8a8a8" dash="2 3" />
        <P p="1434,700 1542,657 1542,671 1446,711" f="#9f9f9f" />
        <P p="1343,1160 1353,1130 1542,1033 1542,1050" f="#a9a9a9" />
        <Lines d="M1442 712L1350 1135" s="#a8a8a8" w={1.5} />
        <Lines d="M1415 706L1445 700" s="#bbb" />
      </g>
    </svg>
  );
}

const DESKS_A = [367, 425, 483, 541, 772, 829, 887, 945];
const DESKS_B = [483, 541, 598, 714, 772, 829];
const DESKS_C = [136, 194, 252];

function MiniMap() {
  return (
    <div className="absolute top-[1003px] left-[1305px] h-[239px] w-[327px] bg-[#f0f0f0]">
      <div className="flex h-[20px] items-start justify-between pt-[2px] pr-[1px] pl-[2px]">
        <div className="flex">
          <svg width="12" height="12" viewBox="0 0 12 12" fill="#fff" stroke="#111">
            <path d="M0.5 0.5H11L0.5 11Z" />
          </svg>
          <span className="mt-[1px] ml-[12px] text-[12px] leading-[18px] font-semibold tracking-[-0.5px] whitespace-nowrap">
            <span className="font-normal">02</span> tweede verdieping
          </span>
        </div>
        <svg width="13" height="13" viewBox="0 0 13 13" fill="#fff" stroke="#333">
          <path d="M2.5 0.5L6.5 4L10.5 0.5L12.5 2.5L9 6.5L12.5 10.5L10.5 12.5L6.5 9L2.5 12.5L0.5 10.5L4 6.5L0.5 2.5Z" />
        </svg>
      </div>
      <svg className="block" width="327" height="160" viewBox="63 123 981 480" fill="none">
        <defs>
          <linearGradient id="cone" x1="1" y1="0" x2="0.4" y2="1">
            <stop offset="0" stopColor="#fdb713" />
            <stop offset="1" stopColor="#f9dc97" />
          </linearGradient>
        </defs>
        <path d="M1018 327H758V371H586V327H296V386H95V559H413V500H1018" stroke="#b4b4b4" strokeWidth="3" />
        <path d="M696 243L635 282Q655 312 698 315Z" fill="url(#cone)" />
        <circle cx="696" cy="243" r="13.5" fill="#fdb100" stroke="#222" strokeWidth="3.5" />
        <g fill="#000">
          {DESKS_A.map((x) => (
            <rect key={x} x={x} y={354} width={32} height={18} />
          ))}
          {DESKS_B.map((x) => (
            <rect key={x} x={x} y={398} width={32} height={17} />
          ))}
          {DESKS_C.map((x) => (
            <rect key={x} x={x} y={412} width={32} height={18} />
          ))}
          <rect x={136} y={456} width={32} height={17} />
        </g>
        <rect x={315} y={414} width={7} height={6} fill="#bbb" />
      </svg>
    </div>
  );
}

function Viewport() {
  return (
    <main className="relative ml-[14px] flex-1">
      <Scene />
      <div className="absolute top-[22px] left-[7px] flex w-[1619px] items-center justify-between">
        <div className="flex items-center">
          <Ico x={40} y={64} w={48} h={46}>
            <path fill="#fff" strokeLinejoin="round" d="M43 80L52 71L75 67L83 83V99L63 106L43 93Z" />
            <path d="M52 71L63 88L83 83M63 88V106M43 80L52 71" strokeWidth={3} />
          </Ico>
          <span className="ml-[4px] text-[13px] leading-[20px]">3D</span>
        </div>
        <WindowIcon />
      </div>
      <MiniMap />
    </main>
  );
}

export default function App() {
  return (
    <div
      className="flex h-[1308px] w-[2557px] flex-col overflow-hidden bg-linear-to-b from-[#f4f4f4] to-white text-black"
      style={{ fontFamily: '"Open Sans", "Noto Sans", sans-serif' }}
    >
      <Toolbar />
      <div className="flex h-[1245px] shrink-0">
        <div className="ml-[11px] flex w-[881px] flex-col pt-[14px]">
          <ModelTree />
          <InfoPanel />
        </div>
        <Viewport />
      </div>
      <footer className="flex pl-[18px] text-[12px] leading-[34px]">
        <span className="w-[2301px] tracking-[-0.25px]">Welcome to Solibri Office</span>
        <span className="tracking-[-0.35px]">Selected: 98</span>
      </footer>
    </div>
  );
}
